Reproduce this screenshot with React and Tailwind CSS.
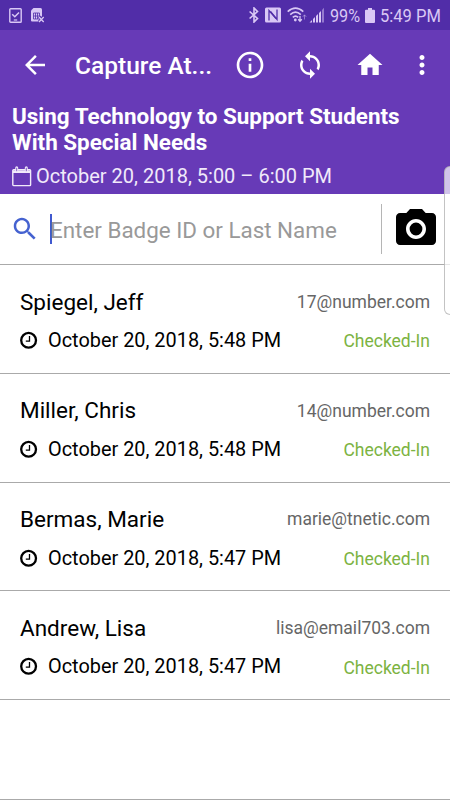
import React from 'react';

const attendees = [
  { name: 'Spiegel, Jeff', email: '17@number.com', time: 'October 20, 2018, 5:48 PM' },
  { name: 'Miller, Chris', email: '14@number.com', time: 'October 20, 2018, 5:48 PM' },
  { name: 'Bermas, Marie', email: 'marie@tnetic.com', time: 'October 20, 2018, 5:47 PM' },
  { name: 'Andrew, Lisa', email: 'lisa@email703.com', time: 'October 20, 2018, 5:47 PM' },
];

// 24px grid material icon
const Icon = ({ d, className }) => (
  <svg viewBox="0 0 24 24" fill="currentColor" className={`shrink-0 ${className}`}>
    <path d={d} />
  </svg>
);

const icons = {
  back: 'M20 11H7.83l5.59-5.59L12 4l-8 8 8 8 1.41-1.41L7.83 13H20v-2z',
  info: 'M11 17h2v-6h-2v6zm1-15C6.48 2 2 6.48 2 12s4.48 10 10 10 10-4.48 10-10S17.52 2 12 2zm0 18c-4.41 0-8-3.59-8-8s3.59-8 8-8 8 3.59 8 8-3.59 8-8 8zM11 9h2V7h-2v2z',
  sync: 'M12 4V1L8 5l4 4V6c3.31 0 6 2.69 6 6 0 1.01-.25 1.97-.7 2.8l1.46 1.46C19.54 15.03 20 13.57 20 12c0-4.42-3.58-8-8-8zm0 14c-3.31 0-6-2.69-6-6 0-1.01.25-1.97.7-2.8L5.24 7.74C4.46 8.97 4 10.43 4 12c0 4.42 3.58 8 8 8v3l4-4-4-4v3z',
  home: 'M10 20v-6h4v6h5v-8h3L12 3 2 12h3v8z',
  more: 'M12 8c1.1 0 2-.9 2-2s-.9-2-2-2-2 .9-2 2 .9 2 2 2zm0 2c-1.1 0-2 .9-2 2s.9 2 2 2 2-.9 2-2-.9-2-2-2zm0 6c-1.1 0-2 .9-2 2s.9 2 2 2 2-.9 2-2-.9-2-2-2z',
  search: 'M15.5 14h-.79l-.28-.27C15.41 12.59 16 11.11 16 9.5 16 5.91 13.09 3 9.5 3S3 5.91 3 9.5 5.91 16 9.5 16c1.61 0 3.09-.59 4.23-1.57l.27.28v.79l5 4.99L20.49 19l-4.99-5zm-6 0C7.01 14 5 11.99 5 9.5S7.01 5 9.5 5 14 7.01 14 9.5 11.99 14 9.5 14z',
  camera: 'M12 8.8a3.2 3.2 0 1 0 0 6.4 3.2 3.2 0 0 0 0-6.4zM9 2L7.17 4H4c-1.1 0-2 .9-2 2v12c0 1.1.9 2 2 2h16c1.1 0 2-.9 2-2V6c0-1.1-.9-2-2-2h-3.17L15 2H9zm3 15c-2.76 0-5-2.24-5-5s2.24-5 5-5 5 2.24 5 5-2.24 5-5 5z',
};

const StatusBar = () => (
  <div className="flex h-[30px] items-center bg-[#512da8] pr-[9px] pl-[9px] text-[#d9c8f5]">
    <svg viewBox="0 0 13 15" fill="none" stroke="currentColor" className="h-[15px] w-[13px]">
      <rect x="0.8" y="0.8" width="11.4" height="13.4" rx="0.8" strokeWidth="1.4" />
      <path d="M3.2 6.2l2.6 2.5 4.2-4.3" strokeWidth="1.5" />
      <path d="M4.8 12h3.4" strokeWidth="1.2" />
    </svg>
    <svg viewBox="0 0 14 15" fill="none" stroke="currentColor" className="ml-[9px] h-[15px] w-[14px]">
      <path d="M0 2.5L2.5 0H9.5Q11 0 11 1.5V8L7.5 13.5H1Q0 13.5 0 12.5z" fill="currentColor" stroke="none" />
      <path d="M2.5 5h6v6h-6zM4.5 5v6M6.5 5v6M2.5 8h6" stroke="#512da8" strokeWidth="0.8" />
      <path d="M8 8.5l5 5.5M13 8.5L8 14" stroke="#512da8" strokeWidth="3" />
      <path d="M8 9l4.7 5M12.7 9L8 14" strokeWidth="1.3" />
    </svg>
    <div className="grow" />
    <svg viewBox="0 0 10 16" fill="none" stroke="currentColor" strokeWidth="1.6" className="h-4 w-[10px]">
      <path d="M0.6 4.5L8.5 11.5 5 15V1l3.5 3.5L0.6 11.5" />
    </svg>
    <svg viewBox="0 0 16 16" className="ml-[6px] h-4 w-4">
      <rect x="0" y="0.5" width="16" height="15" rx="1.5" fill="currentColor" />
      <path d="M4 13.5V3.5L11 11.5" fill="none" stroke="#512da8" strokeWidth="1.3" />
      <path d="M5.5 4.5L12 12.5V2.5" fill="none" stroke="#512da8" strokeWidth="1.3" />
    </svg>
    <svg viewBox="0 0 20 16" fill="none" stroke="currentColor" strokeWidth="1.6" className="ml-[6px] h-4 w-5">
      <path d="M0.7 4.7Q8.5-2.3 16.3 4.7M3.2 7.6Q8.5 2.8 13.8 7.6M5.8 10.4Q8.5 7.9 11.2 10.4" />
      <circle cx="8.3" cy="13" r="1.4" fill="currentColor" stroke="none" />
      <path d="M13 9v5M11.2 12.3l1.8 2 1.8-2" strokeWidth="1.3" />
      <path d="M17.5 12.5V8M15.8 9.8l1.7-2 1.7 2" strokeWidth="1" opacity="0.5" />
    </svg>
    <svg viewBox="0 0 16 16" fill="currentColor" className="ml-[2px] h-4 w-4">
      <path d="M0.5 15.5L3 13v2.5zM4 12l2-2v5.5H4zM7 9l2-2v8.5H7zM10 6l2-2v11.5h-2z" />
      <path d="M13 3l2-2.2v14.7h-2z" opacity="0.5" />
    </svg>
    <span className="ml-[5px] w-[30px] text-[18px] leading-[30px] whitespace-nowrap">
      <span className="inline-block origin-left translate-y-px scale-x-[0.9]">99%</span>
    </span>
    <svg viewBox="0 0 10 15" fill="currentColor" className="ml-[5px] h-[15px] w-[10px]">
      <path d="M3 0h4v1.7h2q1 0 1 1V14q0 1-1 1H1q-1 0-1-1V2.7q0-1 1-1h2z" />
    </svg>
    <span className="ml-[5px] w-[61px] text-[19px] leading-[30px] whitespace-nowrap">
      <span className="inline-block origin-left translate-y-px scale-x-[0.87]">5:49 PM</span>
    </span>
  </div>
);

const Header = () => (
  <header className="h-[164px] bg-[#673ab7] text-white">
    <div className="flex h-[70px] items-center pl-5">
      <Icon d={icons.back} className="h-[30px] w-[30px]" />
      <h1 className="ml-[25px] w-[142px] pt-[2px] text-[24.5px] font-medium whitespace-nowrap">Capture At...</h1>
      <Icon d={icons.info} className="ml-[17px] h-8 w-8" />
      <Icon d={icons.sync} className="ml-[29px] h-[30px] w-[30px]" />
      <Icon d={icons.home} className="ml-[30px] h-[30px] w-[30px]" />
      <Icon d={icons.more} className="ml-[22px] h-[30px] w-[30px]" />
    </div>
    <div className="pt-[3px] pl-3">
      <h2 className="text-[22.45px] leading-[26px] font-bold whitespace-nowrap">
        Using Technology to Support Students
        <br />
        With Special Needs
      </h2>
      <div className="mt-[9px] flex items-center text-[#f1eafa]">
        <svg viewBox="0 0 20 21" fill="none" stroke="currentColor" className="h-[21px] w-5">
          <rect x="0.8" y="3.8" width="17.8" height="15.8" rx="0.8" strokeWidth="1.4" />
          <path d="M0.8 5.7h17.8" strokeWidth="2.6" />
          <path d="M4.7 1.7v3.5M14.3 1.7v3.5" strokeWidth="3" strokeLinecap="round" />
          <path d="M4.7 1.8v3.4M14.3 1.8v3.4" stroke="#673ab7" strokeWidth="0.8" />
        </svg>
        <span className="ml-1 text-[20px] leading-6 whitespace-nowrap">October 20, 2018, 5:00 – 6:00 PM</span>
      </div>
    </div>
  </header>
);

const SearchBar = () => (
  <div className="flex h-[71px] items-center border-b border-[#aaaaaa] pl-[10px]">
    <Icon d={icons.search} className="h-[30px] w-[30px] text-[#4562d0]" />
    <div className="ml-[10px] h-[30px] w-[2px] bg-[#4059cf]" />
    <span className="-ml-[2px] w-[331px] pt-[3px] text-[22.4px] whitespace-nowrap text-[#999999]">
      Enter Badge ID or Last Name
    </span>
    <div className="h-[50px] w-px bg-[#b5b5b5]" />
    <Icon d={icons.camera} className="ml-[10px] h-12 w-12 text-black" />
  </div>
);

const AttendeeRow = ({ name, email, time }) => (
  <li className="h-[108.75px] border-b border-[#aaaaaa] pt-[22px] pr-5 pl-5 text-black">
    <div className="flex h-[30px] items-center justify-between">
      <span className="pt-px text-[22.5px]">{name}</span>
      <span className="text-[17.5px] text-[#666666]">{email}</span>
    </div>
    <div className="mt-2 flex h-[30px] items-center">
      <svg viewBox="0 0 18 18" fill="none" stroke="currentColor" className="h-[18px] w-[18px]">
        <circle cx="8.6" cy="9.3" r="7.4" strokeWidth="2.3" />
        <path d="M9.5 5.1v5H5.8" strokeWidth="1.3" />
      </svg>
      <span className="ml-[10px] grow pt-[2px] text-[19.9px]">{time}</span>
      <span className="pt-[3px] text-[17.5px] text-[#7cb342]">Checked-In</span>
    </div>
  </li>
);

export default function App() {
  return (
    <div className="relative h-[800px] w-[450px] overflow-hidden border-b border-[#aaaaaa] bg-white font-['Roboto',sans-serif]">
      <StatusBar />
      <Header />
      <SearchBar />
      <ul>
        {attendees.map((a) => (
          <AttendeeRow key={a.name} {...a} />
        ))}
      </ul>
      {/* Edge panel handle */}
      <div className="absolute top-[166px] -right-2 h-[149px] w-[14px] rounded-[6px] border border-[#a9a9a9]/70 bg-white/70" />
    </div>
  );
}
